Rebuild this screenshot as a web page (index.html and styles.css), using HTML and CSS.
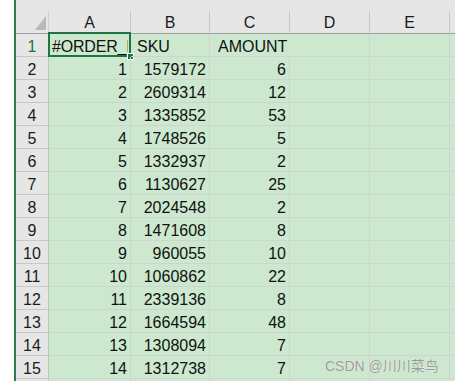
FILE: index.html
```html
<!DOCTYPE html>
<html>
<head>
<meta charset="utf-8">
<link rel="stylesheet" href="styles.css">
</head>
<body>
<div class="app">
  <div class="gutter"></div>
  <div class="frame">
    <div class="topstrip"></div>
    <div class="sheet">
      <div class="corner"><span class="tri"></span></div>
      <div class="ch sel">A</div>
      <div class="ch">B</div>
      <div class="ch">C</div>
      <div class="ch">D</div>
      <div class="ch">E</div>
      <div class="ch last"></div>

      <div class="rh sel">1</div>
      <div class="c t a1"><span class="clip">#ORDER_ID</span><span class="active"><span class="handle"></span></span></div>
      <div class="c t b1">SKU</div>
      <div class="c t c1">AMOUNT</div>
      <div class="c"></div>
      <div class="c"></div>
      <div class="c last"></div>

      <div class="rh">2</div><div class="c n">1</div><div class="c n">1579172</div><div class="c n">6</div><div class="c"></div><div class="c"></div><div class="c last"></div>
      <div class="rh">3</div><div class="c n">2</div><div class="c n">2609314</div><div class="c n">12</div><div class="c"></div><div class="c"></div><div class="c last"></div>
      <div class="rh">4</div><div class="c n">3</div><div class="c n">1335852</div><div class="c n">53</div><div class="c"></div><div class="c"></div><div class="c last"></div>
      <div class="rh">5</div><div class="c n">4</div><div class="c n">1748526</div><div class="c n">5</div><div class="c"></div><div class="c"></div><div class="c last"></div>
      <div class="rh">6</div><div class="c n">5</div><div class="c n">1332937</div><div class="c n">2</div><div class="c"></div><div class="c"></div><div class="c last"></div>
      <div class="rh">7</div><div class="c n">6</div><div class="c n">1130627</div><div class="c n">25</div><div class="c"></div><div class="c"></div><div class="c last"></div>
      <div class="rh">8</div><div class="c n">7</div><div class="c n">2024548</div><div class="c n">2</div><div class="c"></div><div class="c"></div><div class="c last"></div>
      <div class="rh">9</div><div class="c n">8</div><div class="c n">1471608</div><div class="c n">8</div><div class="c"></div><div class="c"></div><div class="c last"></div>
      <div class="rh">10</div><div class="c n">9</div><div class="c n">960055</div><div class="c n">10</div><div class="c"></div><div class="c"></div><div class="c last"></div>
      <div class="rh">11</div><div class="c n">10</div><div class="c n">1060862</div><div class="c n">22</div><div class="c"></div><div class="c"></div><div class="c last"></div>
      <div class="rh">12</div><div class="c n">11</div><div class="c n">2339136</div><div class="c n">8</div><div class="c"></div><div class="c"></div><div class="c last"></div>
      <div class="rh">13</div><div class="c n">12</div><div class="c n">1664594</div><div class="c n">48</div><div class="c"></div><div class="c"></div><div class="c last"></div>
      <div class="rh">14</div><div class="c n">13</div><div class="c n">1308094</div><div class="c n">7</div><div class="c"></div><div class="c"></div><div class="c last"></div>
      <div class="rh">15</div><div class="c n">14</div><div class="c n">1312738</div><div class="c n">7</div><div class="c"></div><div class="c"></div><div class="c last"></div>
      <div class="rh"></div><div class="c"></div><div class="c"></div><div class="c"></div><div class="c"></div><div class="c"></div><div class="c last"></div>
    </div>
  </div>
  <div class="watermark">CSDN @川川菜鸟</div>
</div>
</body>
</html>
```

FILE: styles.css
```css
html, body {
  margin: 0;
  padding: 0;
  width: 455px;
  height: 381px;
  overflow: hidden;
  background: #ffffff;
}

.app {
  position: relative;
  display: flex;
  width: 455px;
  height: 381px;
  overflow: hidden;
  font-family: "Liberation Sans", Arial, "Noto Sans CJK SC", sans-serif;
  font-size: 16px;
  color: #111;
}

.gutter {
  width: 14px;
  flex: none;
  background: #ffffff;
}

.frame {
  flex: 1;
  border-left: 2px solid #2e7d4f;
  display: flex;
  flex-direction: column;
  min-width: 0;
}

.topstrip {
  height: 11px;
  flex: none;
  background: #e6e6e6;
}

.sheet {
  display: grid;
  grid-template-columns: 33px 82px 79px 80px 80px 80px 20px;
  grid-auto-rows: 23px;
  background: #cce8cf;
}

.corner {
  position: relative;
  background: #e6e6e6;
  border-right: 1px solid #cfcfcf;
  border-bottom: 1px solid #9e9e9e;
}

.tri {
  position: absolute;
  right: 2px;
  bottom: 3px;
  width: 0;
  height: 0;
  border-left: 11px solid transparent;
  border-bottom: 14px solid #b9b9b9;
}

.ch {
  background: #e6e6e6;
  border-right: 1px solid #c8c8c8;
  border-bottom: 1px solid #9e9e9e;
  display: flex;
  align-items: flex-end;
  justify-content: center;
  line-height: 18px;
  padding-bottom: 1px;
  color: #1a1a1a;
}

.rh {
  background: #e6e6e6;
  border-right: 1px solid #c2c2c2;
  border-bottom: 1px solid #c8c8c8;
  display: flex;
  align-items: flex-end;
  justify-content: center;
  line-height: 18px;
  color: #1a1a1a;
}

.rh.sel {
  color: #217346;
}

.c {
  position: relative;
  border-right: 1px solid #d2d2d2;
  border-bottom: 1px solid #d2d2d2;
  display: flex;
  align-items: flex-end;
  line-height: 18px;
  white-space: nowrap;
  min-width: 0;
}

.c.last {
  border-right: none;
}

.n {
  justify-content: flex-end;
  padding-right: 3px;
}

.t {
  justify-content: flex-start;
}

.a1 {
  padding-left: 3px;
}

.clip {
  display: block;
  width: 76px;
  overflow: hidden;
  letter-spacing: -0.2px;
}

.b1 {
  padding-left: 6px;
}

.c1 {
  padding-left: 8px;
  border-right-color: transparent;
}

.active {
  position: absolute;
  left: -1px;
  top: -2px;
  width: 79px;
  height: 21px;
  border: 2px solid #217346;
  pointer-events: none;
}

.handle {
  position: absolute;
  right: -5px;
  bottom: -5px;
  width: 5px;
  height: 5px;
  background: #217346;
  border: 1px solid #ffffff;
}

.watermark {
  position: absolute;
  left: 325px;
  top: 355px;
  font-size: 14px;
  color: #9a9a9a;
  text-shadow: 0 0 1px #ffffff;
  white-space: nowrap;
}
```
